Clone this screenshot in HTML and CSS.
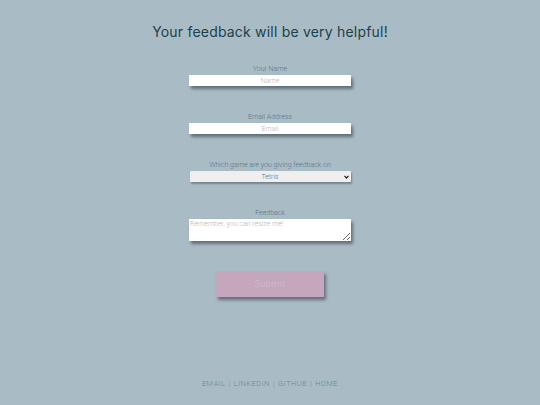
FILE: index.html
```html
<!DOCTYPE html>
<html>
<head>
<meta charset="utf-8">
<link rel="stylesheet" href="styles.css">
</head>
<body>
<div class="page">
  <h1 class="title">Your feedback will be very helpful!</h1>
  <form class="form">
    <div class="field">
      <label class="label">Your Name</label>
      <input class="input" type="text" placeholder="Name">
    </div>
    <div class="field">
      <label class="label">Email Address</label>
      <input class="input" type="text" placeholder="Email">
    </div>
    <div class="field">
      <label class="label">Which game are you giving feedback on</label>
      <div class="select-wrap">
        <select class="select"><option>Tetris</option></select>
        <svg class="chev" width="5" height="4" viewBox="0 0 5 4"><path d="M0.5 0.8 L2.5 3 L4.5 0.8" fill="none" stroke="#222" stroke-width="1.2"/></svg>
      </div>
    </div>
    <div class="field">
      <label class="label">Feedback</label>
      <textarea class="textarea" placeholder="Remember, you can resize me!"></textarea>
    </div>
    <button class="submit" type="button">Submit</button>
  </form>
  <footer class="footer">
    <a>EMAIL</a><span class="sep">|</span><a>LINKEDIN</a><span class="sep">|</span><a>GITHUB</a><span class="sep">|</span><a>HOME</a>
  </footer>
</div>
</body>
</html>
```
FILE: styles.css
```css
html, body {
  margin: 0;
  padding: 0;
  background: #a9bcc6;
  width: 540px;
  height: 405px;
  overflow: hidden;
}
.page {
  display: flex;
  flex-direction: column;
  align-items: center;
  height: 405px;
  font-family: Roboto, "Liberation Sans", sans-serif;
}
.title {
  margin: 23px 0 0;
  font-family: Inter, "Open Sans", sans-serif;
  font-weight: 400;
  font-size: 14px;
  line-height: 18px;
  color: #1e3f4e;
  letter-spacing: 0.2px;
}
.form {
  display: flex;
  flex-direction: column;
  align-items: center;
  margin-top: 24px;
}
.field {
  display: flex;
  flex-direction: column;
  align-items: center;
  gap: 1px;
  margin-bottom: 27px;
}
.label {
  font-size: 7px;
  line-height: 9px;
  font-weight: 300;
  color: #5c7380;
}
.input, .select, .textarea {
  box-sizing: border-box;
  width: 162px;
  border: none;
  margin: 0;
  font-family: Roboto, "Liberation Sans", sans-serif;
  font-weight: 300;
  font-size: 7px;
  box-shadow: 2px 3px 3px rgba(40, 50, 55, 0.55);
}
.input {
  display: block;
  height: 11px;
  padding: 0 4px;
  text-align: center;
  background: #ffffff;
}
.input::placeholder {
  color: #b9b9b9;
}
.select-wrap {
  position: relative;
  width: 161px;
  height: 11px;
}
.select {
  display: block;
  appearance: none;
  -webkit-appearance: none;
  width: 161px;
  height: 11px;
  padding: 0 2px;
  background: #efefef;
  color: #6e6e6e;
  text-align: center;
  text-align-last: center;
  box-shadow: 1px 2px 2px rgba(40, 50, 55, 0.4);
  border-radius: 1px;
  outline: none;
}
.chev {
  position: absolute;
  right: 2px;
  top: 4px;
}
.textarea {
  height: 22px;
  padding: 1px 1px;
  background: #ffffff;
  resize: vertical;
  display: block;
}
.textarea::placeholder {
  color: #b4b4b4;
}
.submit {
  margin-top: 3px;
  width: 108px;
  height: 26px;
  border: none;
  background: #c4a6bd;
  color: #d6bfd0;
  font-family: Roboto, "Liberation Sans", sans-serif;
  font-weight: 300;
  font-size: 9px;
  letter-spacing: 0.5px;
  box-shadow: 2px 3px 3px rgba(60, 55, 75, 0.6);
}
.footer {
  margin-top: auto;
  margin-bottom: 17px;
  font-family: Roboto, sans-serif;
  font-weight: 300;
  font-size: 7.5px;
  letter-spacing: 0.45px;
  color: #6a8796;
  display: flex;
  gap: 3px;
}
.footer a {
  color: #6a8796;
}
.sep {
  color: #6a8796;
}
```
